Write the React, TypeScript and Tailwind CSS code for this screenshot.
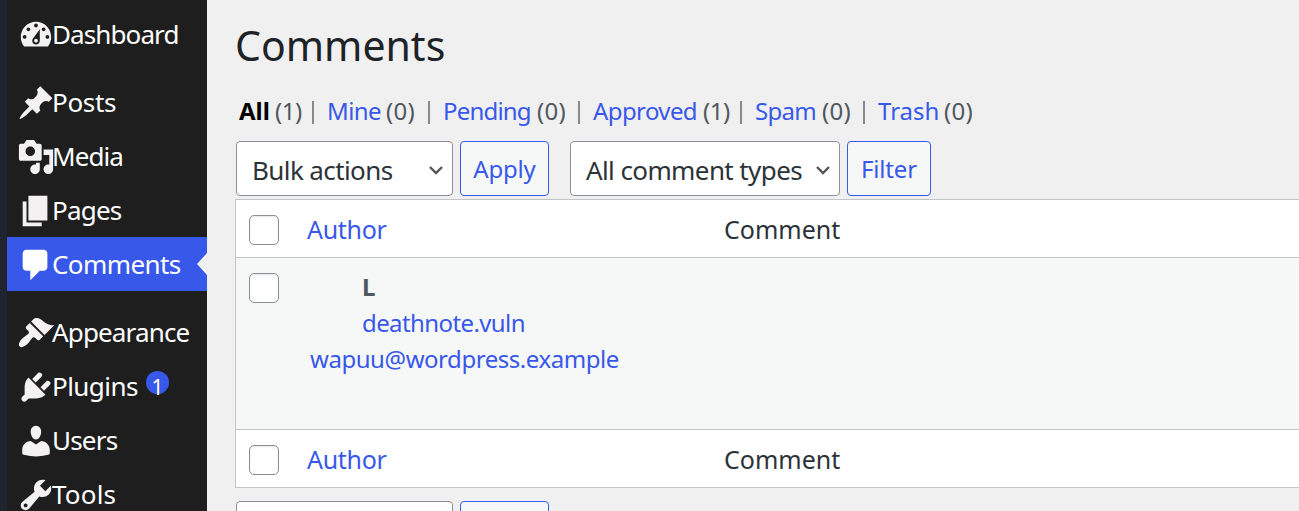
import React from "react";

const ICONS: Record<string, string> = {
  dashboard:
    "M3.76 16h12.48c1.1-1.37 1.76-3.11 1.76-5 0-4.42-3.58-8-8-8s-8 3.58-8 8c0 1.89.66 3.63 1.76 5zM10 4c.55 0 1 .45 1 1s-.45 1-1 1-1-.45-1-1 .45-1 1-1zM6 6c.55 0 1 .45 1 1s-.45 1-1 1-1-.45-1-1 .45-1 1-1zm8 0c.55 0 1 .45 1 1s-.45 1-1 1-1-.45-1-1 .45-1 1-1zm-5.37 5.55L12 7v6c0 1.1-.9 2-2 2s-2-.9-2-2c0-.57.24-1.08.63-1.45zM4 10c.55 0 1 .45 1 1s-.45 1-1 1-1-.45-1-1 .45-1 1-1zm12 0c.55 0 1 .45 1 1s-.45 1-1 1-1-.45-1-1 .45-1 1-1zm-5 3c0-.55-.45-1-1-1s-1 .45-1 1 .45 1 1 1 1-.45 1-1z",
  posts:
    "M10.44 3.02l1.82-1.82 6.36 6.35-1.83 1.82c-1.05-.68-2.48-.57-3.41.36l-.75.75c-.92.93-1.04 2.35-.35 3.41l-1.83 1.82-2.41-2.41-2.8 2.79c-.42.42-3.38 2.71-3.8 2.29s1.86-3.39 2.28-3.81l2.79-2.79L4.1 9.36l1.83-1.82c1.05.69 2.48.57 3.4-.36l.75-.75c.93-.92 1.05-2.35.36-3.41z",
  media:
    "M13 11V4c0-.55-.45-1-1-1h-1.67L9 1H5L3.67 3H2c-.55 0-1 .45-1 1v7c0 .55.45 1 1 1h10c.55 0 1-.45 1-1zM7 4.5c1.38 0 2.5 1.12 2.5 2.5S8.38 9.5 7 9.5 4.5 8.38 4.5 7 5.62 4.5 7 4.5zM14 6h5v10.5c0 1.38-1.12 2.5-2.5 2.5S14 17.88 14 16.5s1.12-2.5 2.5-2.5c.17 0 .34.02.5.05V9h-3V6zm-4 8.05V13h2v3.5c0 1.38-1.12 2.5-2.5 2.5S7 17.88 7 16.5 8.12 14 9.5 14c.17 0 .34.02.5.05z",
  pages: "M6 15V2h10v13H6zm-1 1h8v2H3V5h2v11z",
  comments:
    "M5 2h9c1.1 0 2 .9 2 2v7c0 1.1-.9 2-2 2h-2l-5 5v-5H5c-1.1 0-2-.9-2-2V4c0-1.1.9-2 2-2z",
  appearance:
    "M14.48 11.06L7.41 3.99l1.5-1.5c.5-.56 2.3-.47 3.51.32 1.21.8 1.43 1.28 2.91 2.1 1.18.64 2.45 1.26 4.45.85zm-.71.71L6.7 4.7 4.93 6.47c-.39.39-.39 1.02 0 1.41l1.06 1.06c.39.39.39 1.03 0 1.42-.6.6-1.43 1.11-2.21 1.69-.35.26-.7.53-1.01.84C1.43 14.23.4 16.08 1.4 17.07c.99 1 2.84-.03 4.18-1.36.31-.31.58-.66.85-1.02.57-.78 1.08-1.61 1.69-2.21.39-.39 1.02-.39 1.41 0l1.06 1.06c.39.39 1.02.39 1.41 0z",
  plugins:
    "M13.11 4.36L9.87 7.6 8 5.73l3.24-3.24c.35-.34 1.05-.2 1.56.32.52.51.66 1.21.31 1.55zm-8 1.77l.91-1.12 9.01 9.01-1.19.84c-.71.71-2.63 1.16-3.82 1.16H6.14L4.9 17.26c-.59.59-1.54.59-2.12 0-.59-.58-.59-1.53 0-2.12l1.24-1.24v-3.88c0-1.13.4-3.19 1.09-3.89zm7.26 3.97l3.24-3.24c.34-.35 1.04-.21 1.55.31.52.51.66 1.21.31 1.55l-3.24 3.25z",
  users:
    "M10 9.25c-2.27 0-2.73-3.44-2.73-3.44C7 4.02 7.82 2 9.97 2c2.16 0 2.98 2.02 2.71 3.81 0 0-.41 3.44-2.68 3.44zm0 2.57L12.72 10c2.39 0 4.52 2.33 4.52 4.53v2.49s-3.65 1.13-7.24 1.13c-3.65 0-7.24-1.13-7.24-1.13v-2.49c0-2.25 1.94-4.48 4.47-4.48z",
  tools:
    "M16.68 9.77c-1.34 1.34-3.3 1.67-4.95.99l-5.41 6.52c-.99.99-2.59.99-3.58 0s-.99-2.59 0-3.57l6.52-5.42c-.68-1.65-.35-3.61.99-4.95 1.28-1.28 3.12-1.62 4.72-1.06l-2.89 2.89 2.82 2.82 2.86-2.87c.53 1.58.18 3.39-1.08 4.65zM3.81 16.21c.4.39 1.04.39 1.43 0 .4-.4.4-1.04 0-1.43-.39-.4-1.03-.4-1.43 0-.39.39-.39 1.03 0 1.43z",
};

type MenuItem = {
  icon: string;
  label: string;
  spacing: string;
  gap?: boolean;
  current?: boolean;
  count?: string;
};

const MENU: MenuItem[] = [
  { icon: "dashboard", label: "Dashboard", spacing: "tracking-[-0.9px]" },
  { icon: "posts", label: "Posts", spacing: "tracking-[-0.3px]", gap: true },
  { icon: "media", label: "Media", spacing: "tracking-[-0.9px]" },
  { icon: "pages", label: "Pages", spacing: "tracking-[-0.8px]" },
  { icon: "comments", label: "Comments", spacing: "tracking-[-0.6px]", current: true },
  { icon: "appearance", label: "Appearance", spacing: "tracking-[-0.85px]", gap: true },
  { icon: "plugins", label: "Plugins", spacing: "tracking-[-0.55px]", count: "1" },
  { icon: "users", label: "Users", spacing: "tracking-[-0.8px]" },
  { icon: "tools", label: "Tools", spacing: "tracking-[0.2px]" },
];

function SideItem({ icon, label, spacing, gap, current, count }: MenuItem) {
  return (
    <li
      className={`relative flex h-[54px] shrink-0 items-center pl-2.5 ${gap ? "mt-3.5" : ""} ${
        current ? "bg-[#3858e9] text-white" : "text-[#f3f1f1]"
      }`}
    >
      <svg viewBox="0 0 20 20" className="mt-0.5 h-[38px] w-[38px] shrink-0" fill="currentColor" fillRule="evenodd">
        <path d={ICONS[icon]} />
      </svg>
      <span className={`-ml-[3px] text-[26px] leading-[54px] text-white ${spacing}`}>{label}</span>
      {count && (
        <span className="absolute top-3 left-[139px] flex h-[23px] w-[23px] justify-center rounded-full bg-[#3858e9] pt-[5px] text-[21px] leading-[23px] text-white">
          {count}
        </span>
      )}
      {current && (
        <svg viewBox="0 0 10 22" className="absolute top-4 right-0 h-[22px] w-2.5" fill="#f0f0f1">
          <path d="M10 0v22L0 11z" />
        </svg>
      )}
    </li>
  );
}

type View = { name: string; count: string; nameBox: string; countBox: string; current?: boolean };

const VIEWS: View[] = [
  { name: "All", count: "(1)", nameBox: "w-[36px]", countBox: "w-[37px] tracking-[-0.5px]", current: true },
  { name: "Mine", count: "(0)", nameBox: "w-[59px] tracking-[-0.6px]", countBox: "w-[42px] tracking-[0.3px]" },
  { name: "Pending", count: "(0)", nameBox: "w-[94px] tracking-[-0.8px]", countBox: "w-[41px] tracking-[0.3px]" },
  { name: "Approved", count: "(1)", nameBox: "w-[110px] tracking-[-0.6px]", countBox: "w-[37px] tracking-[-0.5px]" },
  { name: "Spam", count: "(0)", nameBox: "w-[67px] tracking-[-0.7px]", countBox: "w-[41px] tracking-[0.3px]" },
  { name: "Trash", count: "(0)", nameBox: "w-[66px]", countBox: "w-[41px] tracking-[0.3px]" },
];

function Views() {
  return (
    <ul className="flex h-[36px] items-center pl-1 text-[24px] leading-[36px] whitespace-nowrap text-[#50575e]">
      {VIEWS.map((v, i) => (
        <li key={v.name} className="flex">
          <a className={`${v.nameBox} ${v.current ? "font-bold text-black" : "text-[#3858e9]"}`}>{v.name}</a>
          <span className={v.countBox}>{v.count}</span>
          {i < VIEWS.length - 1 && (
            <span className="flex h-[36px] w-[15px] items-center pt-0.5">
              <span className="h-[23px] w-[2px] bg-[#858a8f]" />
            </span>
          )}
        </li>
      ))}
    </ul>
  );
}

function SelectBox({ label, box }: { label: string; box: string }) {
  return (
    <div
      className={`flex h-[55px] shrink-0 items-center justify-between rounded-[4px] border border-[#8c8f94] bg-white pr-[9px] pl-[15px] text-[26px] whitespace-nowrap text-[#2c3338] ${box}`}
    >
      <span className="pt-[3px] tracking-[-0.6px]">{label}</span>
      <svg viewBox="0 0 14 9" className="mt-[3px] h-[9px] w-[14px] shrink-0" fill="none" stroke="#555" strokeWidth="2.4">
        <path d="M1 1l6 6 6-6" />
      </svg>
    </div>
  );
}

function Button({ label, box }: { label: string; box: string }) {
  return (
    <button
      className={`flex h-[55px] shrink-0 items-center justify-center rounded-[4px] border border-[#3858e9] bg-[#f6f7f7] pt-px text-[24px] tracking-[-0.2px] text-[#3858e9] ${box}`}
    >
      {label}
    </button>
  );
}

function Checkbox() {
  return (
    <span className="block h-[30px] w-[30px] shrink-0 rounded-[5px] border border-[#8c8f94] bg-white shadow-[inset_0_1px_2px_rgba(0,0,0,0.1)]" />
  );
}

function HeadRow({ edge }: { edge: string }) {
  return (
    <div className={`flex items-center border-[#c3c4c7] bg-white pl-[13px] text-[25px] text-[#2c3338] ${edge}`}>
      <Checkbox />
      <span className="ml-[28px] w-[417px] tracking-[-0.3px] text-[#3858e9]">Author</span>
      <span>Comment</span>
    </div>
  );
}

export default function App() {
  return (
    <div className="flex h-[511px] w-[1299px] overflow-hidden bg-[#f0f0f1] font-['Noto_Sans',sans-serif]">
      <div className="w-[7px] shrink-0 bg-[#20242f]" />
      <nav className="w-[200px] shrink-0 bg-[#1e1e1e]">
        <ul className="flex flex-col pt-[7px]">
          {MENU.map((m) => (
            <SideItem key={m.label} {...m} />
          ))}
        </ul>
      </nav>
      <main className="flex min-w-0 flex-1 flex-col pl-7">
        <h1 className="mt-[15px] h-[60px] text-[41px] leading-[60px] text-[#1d2327]">Comments</h1>
        <div className="mt-[18px]">
          <Views />
        </div>
        <div className="mt-[12px] flex pl-px">
          <SelectBox label="Bulk actions" box="w-[217px]" />
          <Button label="Apply" box="ml-[7px] w-[89px]" />
          <SelectBox label="All comment types" box="ml-[21px] w-[270px]" />
          <Button label="Filter" box="ml-[7px] w-[84px]" />
        </div>
        <section className="mt-[3px] flex h-[289px] shrink-0 flex-col border border-r-0 border-[#c3c4c7]">
          <HeadRow edge="h-[58px] border-b pt-[2px]" />
          <div className="flex flex-1 items-start bg-[#f6f7f7] pl-[13px]">
            <div className="pt-[15px]">
              <Checkbox />
            </div>
            <div className="ml-[31px] pt-[11px] text-[24px] leading-[36px] text-[#3858e9]">
              <div className="pl-[52px] font-bold text-[#50575e]">L</div>
              <div className="pl-[52px] tracking-[-0.6px]">deathnote.vuln</div>
              <div className="tracking-[-0.45px]">wapuu@wordpress.example</div>
            </div>
          </div>
          <HeadRow edge="h-[58px] border-t pt-[2px]" />
        </section>
        <div className="mt-[13px] flex pl-px">
          <SelectBox label="" box="w-[217px]" />
          <Button label="" box="ml-[7px] w-[89px]" />
        </div>
      </main>
    </div>
  );
}
